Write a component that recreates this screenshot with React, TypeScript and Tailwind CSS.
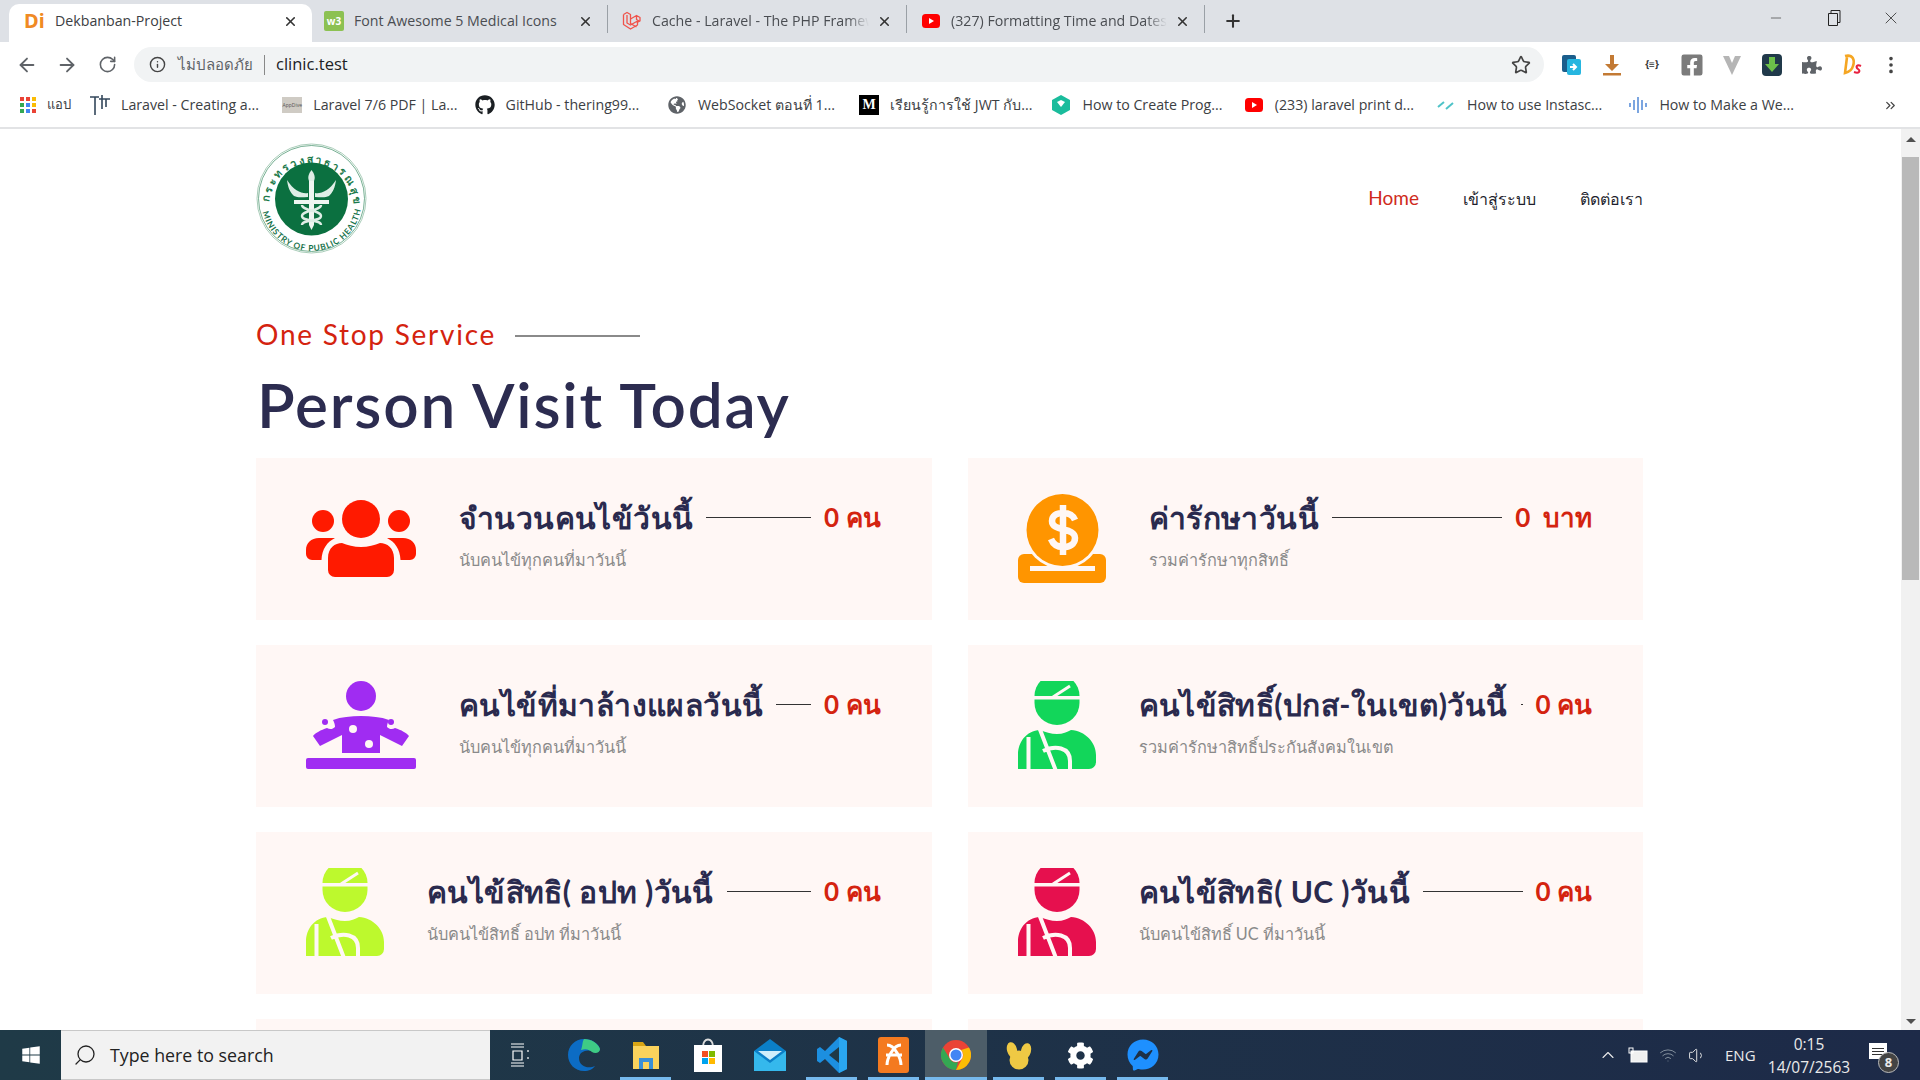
import { ArrowLeft, ArrowRight, RotateCw, Info, Star, Plus, X, Minus, Search, ChevronUp, EllipsisVertical, ChevronsRight, Volume1, Wifi } from "lucide-react";
import { FaGithub, FaGlobeAmericas, FaWindows, FaPuzzlePiece, FaFacebookSquare, FaFacebookMessenger, FaCog } from "react-icons/fa";

const CARD_BG = "#fff7f5";

const YouTube = () => (
  <svg width="18" height="14" viewBox="0 0 18 14">
    <rect width="18" height="14" rx="3.5" fill="#f00" />
    <path d="M7 4l5 3-5 3z" fill="#fff" />
  </svg>
);

const Laravel = ({ size = 20 }: { size?: number }) => (
  <svg width={size} height={size} viewBox="0 0 20 20" fill="none" stroke="#f0534b" strokeWidth="1.3" strokeLinejoin="round">
    <path d="M1.5 3.5l3.5-2 3.5 2v9l6 3.5" />
    <path d="M1.5 3.5v10l7 4.5 7-4v-4l-7 4-3.5-2v-8" />
    <path d="M8.5 8l6-3.5 3.5 2v3.5l-3 1.5M14.5 4.5v4l3.5 2" />
  </svg>
);

const tabs = [
  {
    title: "Font Awesome 5 Medical Icons",
    w: "w-[296px]",
    pad: "pl-[12px]",
    fade: "",
    icon: (
      <div className="w-[20px] h-[20px] bg-[#8cc152] rounded-[2px] flex items-center justify-center text-white text-[10px] font-bold">w3</div>
    ),
  },
  { title: "Cache - Laravel - The PHP Framew", w: "w-[299px]", pad: "pl-[14px]", fade: "[mask-image:linear-gradient(to_right,black_90%,transparent)]", icon: <Laravel /> },
  { title: "(327) Formatting Time and Dates", w: "w-[298px]", pad: "pl-[14px]", fade: "[mask-image:linear-gradient(to_right,black_90%,transparent)]", icon: <YouTube /> },
];

const bookmarks = [
  {
    t: "Laravel - Creating a...",
    i: (
      <svg width="20" height="22" viewBox="0 0 20 22" fill="none" stroke="#33475b" strokeWidth="1.6">
        <path d="M0 3h9M5 3v18M12 1v14M9 5h11M16 5v8" />
      </svg>
    ),
  },
  {
    t: "Laravel 7/6 PDF | La...",
    i: <div className="w-[20px] h-[16px] bg-[#cfcbc4] text-[5px] leading-[16px] text-center text-[#555]">AppDive</div>,
  },
  { t: "GitHub - thering99...", i: <FaGithub size={20} color="#1b1f23" /> },
  { t: "WebSocket ตอนที่ 1...", i: <FaGlobeAmericas size={18} color="#5f6368" /> },
  {
    t: "เรียนรู้การใช้ JWT กับ...",
    i: <div className="w-[20px] h-[20px] bg-black text-white text-[14px] leading-[20px] text-center font-bold font-['Liberation_Serif',serif]">M</div>,
  },
  {
    t: "How to Create Prog...",
    i: (
      <svg width="18" height="20" viewBox="0 0 18 20">
        <path d="M9 0l9 5v10l-9 5-9-5V5z" fill="#1abc9c" />
        <path d="M5 7l4-2 4 2-4 5z" fill="#fff" />
      </svg>
    ),
  },
  { t: "(233) laravel print d...", i: <YouTube /> },
  {
    t: "How to use Instasc...",
    i: (
      <svg width="20" height="20" viewBox="0 0 20 20" fill="none" stroke="#4fc3c8" strokeWidth="2">
        <path d="M2 12l6-5M10 14l7-6" />
      </svg>
    ),
  },
  {
    t: "How to Make a We...",
    i: (
      <svg width="20" height="20" viewBox="0 0 20 20" stroke="#5b8fd9" strokeWidth="1.6">
        <path d="M2 8v4M6 5v10M10 2v16M14 5v10M18 8v4" />
      </svg>
    ),
  },
];

const TabBar = () => (
  <div className="h-[42px] bg-[#dee1e6] flex items-end flex-none">
    <div className="ml-[9px] w-[303px] h-[38px] bg-white rounded-t-[10px] flex items-center pl-[15px] pr-[14px] pb-[4px]">
      <span className="w-[26px] text-[#f08a24] text-[20px] font-bold font-['Noto_Sans',sans-serif]">Di</span>
      <span className="ml-[5px] flex-1 text-[14.2px] text-[#3c4043]">Dekbanban-Project</span>
      <X size={15} strokeWidth={2.5} color="#333" />
    </div>
    {tabs.map((tab) => (
      <div key={tab.title} className={`${tab.w} ${tab.pad} h-[38px] flex items-center pr-[14px] pb-[4px] border-r border-[#9aa0a6] [border-image:linear-gradient(transparent_5%,#9aa0a6_5%,#9aa0a6_75%,transparent_75%)_1]`}>
        <div className="w-[20px] flex-none flex justify-center">{tab.icon}</div>
        <span className={`ml-[10px] flex-1 min-w-0 whitespace-nowrap text-[14.2px] text-[#4a4d52] ${tab.fade}`}>
          {tab.title}
        </span>
        <X size={15} strokeWidth={2.5} color="#333" className="ml-[8px] flex-none" />
      </div>
    ))}
    <div className="h-[38px] ml-[18px] flex items-center pb-[4px]">
      <Plus size={20} strokeWidth={2.5} color="#333" />
    </div>
    <div className="flex-1" />
    <div className="h-[42px] flex items-center text-[#333] pb-[6px]">
      <Minus size={16} strokeWidth={1} className="mr-[43px]" />
      <svg width="14" height="16" viewBox="0 0 14 16" fill="none" stroke="#222" className="mr-[40px]">
        <path d="M1.5 3.5h9v12h-9zM4 3.5v-3h9v12h-2.5" />
      </svg>
      <X size={20} strokeWidth={1} className="mr-[19px]" />
    </div>
  </div>
);

const ExtIcons = () => (
  <div className="flex items-center gap-[16px] ml-[16px]">
    <svg width="24" height="24" viewBox="0 0 24 24">
      <rect x="2" y="2" width="14" height="17" rx="2" fill="#1b5e8c" />
      <rect x="7" y="6" width="14" height="16" rx="2" fill="#26b6e0" />
      <path d="M10 14h6M13 11l3 3-3 3" stroke="#fff" strokeWidth="2" fill="none" />
    </svg>
    <svg width="24" height="24" viewBox="0 0 24 24">
      <path d="M10 2h4v9h5l-7 7-7-7h5z" fill="#c37a34" />
      <rect x="3" y="20" width="18" height="2.5" fill="#c37a34" />
    </svg>
    <span className="w-[24px] text-center text-[10px] font-bold text-[#333]">{"{≡}"}</span>
    <FaFacebookSquare size={24} color="#7b7b7b" />
    <svg width="24" height="24" viewBox="0 0 24 24">
      <path d="M3 3h18l-9 19z" fill="#b5b5b5" />
      <path d="M9 3h6l-3 7z" fill="#fff" />
    </svg>
    <svg width="24" height="24" viewBox="0 0 24 24">
      <rect x="2" y="1" width="20" height="22" rx="4" fill="#20394a" />
      <path d="M9 4h6v7h4l-7 8-7-8h4z" fill="#6cc04a" />
    </svg>
    <FaPuzzlePiece size={20} color="#5f6368" className="mx-[2px]" />
    <svg width="24" height="24" viewBox="0 0 24 24" fill="none" strokeWidth="2.6">
      <path d="M5 3c8-2 10 4 8 10-1 4-4 6-8 7l2-16" stroke="#f5a623" />
      <path d="M21 13c-4-2-6 1-3 3s1 5-4 3" stroke="#e8213f" strokeWidth="2" />
    </svg>
    <EllipsisVertical size={22} color="#444" />
  </div>
);

const Toolbar = () => (
  <div className="h-[45px] bg-white flex items-center flex-none pl-[16px]">
    <ArrowLeft size={22} strokeWidth={2} color="#5f6368" />
    <ArrowRight size={22} strokeWidth={2} color="#5f6368" className="ml-[18px]" />
    <RotateCw size={19} strokeWidth={2} color="#5f6368" className="ml-[20px]" />
    <div className="ml-[17px] w-[1410px] h-[35px] rounded-full bg-[#f1f3f4] flex items-center pl-[15px] pr-[13px]">
      <Info size={17} color="#444" />
      <span className="ml-[12px] text-[15px] text-[#5f6368]">ไม่ปลอดภัย</span>
      <div className="w-px h-[20px] bg-[#888] ml-[11px]" />
      <span className="ml-[11px] text-[16.5px] text-[#202124]">clinic.test</span>
      <div className="flex-1" />
      <Star size={20} color="#444" />
    </div>
    <ExtIcons />
  </div>
);

const BookmarkBar = () => (
  <div className="h-[42px] bg-white flex items-center flex-none pl-[20px] pb-[4px] border-b-[2px] border-[#e2e3e5]">
    <div className="grid grid-cols-3 gap-[2px] w-[16px] flex-none">
      {["#ea4335", "#ea4335", "#fbbc05", "#34a853", "#4285f4", "#fbbc05", "#34a853", "#4285f4", "#ea4335"].map((c, i) => (
        <div key={i} className="h-[4px]" style={{ backgroundColor: c }} />
      ))}
    </div>
    <span className="ml-[11px] w-[43px] flex-none text-[13px] text-[#3c4043]">แอป</span>
    <div className="flex items-center">
      {bookmarks.map((b) => (
        <div key={b.t} className="w-[192.3px] flex-none flex items-center gap-[11px]">
          <div className="w-[20px] flex justify-center flex-none">{b.i}</div>
          <span className="whitespace-nowrap text-[14.2px] text-[#3c4043]">{b.t}</span>
        </div>
      ))}
    </div>
    <div className="flex-1" />
    <ChevronsRight size={15} color="#444" className="mr-[22px]" />
  </div>
);

const Logo = () => (
  <svg width="111" height="111" viewBox="0 0 111 111">
    <defs>
      <path id="arcTop" d="M13.500 62a42 42 0 1 1 84 0" />
      <path id="arcBottom" d="M5.500 58a50 50 0 0 0 100 0" />
    </defs>
    <circle cx="55.500" cy="55.500" r="54.500" fill="#fff" stroke="#a9cdb9" strokeWidth="1" />
    <circle cx="55.500" cy="55.500" r="53" fill="none" stroke="#1c7a4b" strokeWidth="0.6" />
    <text fontSize="10.500" fontWeight="700" fill="#1c7a4b">
      <textPath href="#arcTop" startOffset="2%" textLength="128" lengthAdjust="spacing">กระทรวงสาธารณสุข</textPath>
    </text>
    <circle cx="55.500" cy="56" r="36.500" fill="#0b7040" />
    <text fontSize="8.300" fontWeight="700" fill="#17724a" fontFamily="Lato, sans-serif">
      <textPath href="#arcBottom" startOffset="7%" textLength="137" lengthAdjust="spacing">MINISTRY OF PUBLIC HEALTH</textPath>
    </text>
    <path d="M55.500 27c3 4 4 7 2.500 11h-5c-1.500-4-.500-7 2.500-11z" fill="#dfeee6" />
    <path d="M53 38h5v44l-2.500 5-2.500-5z" fill="#eef6f1" />
    <path d="M52 50c-6 1-14-2-21-13 1 8 3 12 7 16 4 2 9 1 14 1zM59 50c6 1 14-2 21-13-1 8-3 12-7 16-4 2-9 1-14 1z" fill="#dfeee6" />
    <path d="M38 57h35v4H38z" fill="#eef6f1" />
    <path d="M46 62c0 6 19 5 19 11s-19 3-19 9M65 62c0 6-19 5-19 11s19 3 19 9" fill="none" stroke="#dfeee6" strokeWidth="2.400" />
  </svg>
);

const UsersIcon = () => (
  <svg width="110" height="77" viewBox="0 0 110 77" fill="#ff1a00">
    <circle cx="55" cy="19" r="19" />
    <circle cx="17" cy="21" r="11" />
    <circle cx="93" cy="21" r="11" />
    <path d="M22 70V58c0-10 7-15 14-15 5 2 12 4 19 4s14-2 19-4c7 0 14 5 14 15v12a7 7 0 0 1-7 7H29a7 7 0 0 1-7-7z" />
    <path d="M0 54v-4c0-7 5-12 13-12h16c-8 4-13 11-13.500 22H6a6 6 0 0 1-6-6z" />
    <path d="M110 54v-4c0-7-5-12-13-12H81c8 4 13 11 13.500 22H104a6 6 0 0 0 6-6z" />
  </svg>
);

const CoinIcon = () => (
  <svg width="88" height="89" viewBox="0 0 88 89">
    <path d="M0 66a6 6 0 0 1 6-6h76a6 6 0 0 1 6 6v17a6 6 0 0 1-6 6H6a6 6 0 0 1-6-6z" fill="#ff9500" />
    <circle cx="44.500" cy="36" r="39" fill={CARD_BG} />
    <circle cx="44.500" cy="36" r="36" fill="#ff9500" />
    <rect x="12" y="72" width="65" height="5" fill={CARD_BG} />
    <path d="M57 26c-2-5-7-7-12-7-7 0-11 3-11 8 0 11 23 6 23 17 0 6-5 9-12 9-6 0-10-3-12-8M45 11v50" fill="none" stroke={CARD_BG} strokeWidth="6.500" />
  </svg>
);

const MassageIcon = () => (
  <svg width="110" height="88" viewBox="0 0 110 88" fill="#a02cf2">
    <circle cx="55" cy="15" r="15" />
    <rect y="77" width="110" height="11" rx="2" />
    <path d="M36 72V54L14 65 7 55c2-3 8-6 14-8 3 2 6 1 8-1 0-3-1-5-2-7 8-3 18-4 28-4s20 1 28 4c-1 2-2 4-2 7 2 2 5 3 8 1 6 2 12 5 14 8l-7 10-22-11v18z" />
    <circle cx="47" cy="48" r="4" fill={CARD_BG} />
    <circle cx="63" cy="63" r="4" fill={CARD_BG} />
    <circle cx="19" cy="41" r="3" />
    <circle cx="85" cy="41" r="3" />
  </svg>
);

const PatientIcon = ({ color }: { color: string }) => (
  <svg width="78" height="88" viewBox="0 0 78 88" fill={color}>
    <path d="M16.500 15a22.500 22 0 0 1 45 0z" />
    <path d="M16.500 18.500h45V22a22.500 22 0 0 1-45 0z" />
    <path d="M0 88V74c0-13 8-24 22-25 5 2 11 4 17 4s10-2 14-4c14 1 25 12 25 25v7a7 7 0 0 1-7 7z" />
    <g fill="none" stroke={CARD_BG}>
      <path d="M10.500 56v34M21 46l17 44M25 70c12-6 27-4 27 10v10" strokeWidth="4" />
      <path d="M52 5L35 16" strokeWidth="3" />
    </g>
  </svg>
);

const Card = ({ icon, title, desc, value, unit }: { icon: React.ReactNode; title: string; desc: string; value: string; unit: string }) => (
  <div className="h-[162px] bg-[#fff7f5] flex pl-[50px] pr-[51px] pt-[36px]">
    <div className="h-[88px] flex items-center flex-none mr-[43px]">{icon}</div>
    <div className="flex-1 min-w-0">
      <div className="flex items-center h-[46px]">
        <span className="text-[30px] tracking-[0.4px] font-bold text-[#2a2a4e] whitespace-nowrap">{title}</span>
        <div className="flex-1 h-px bg-[#333] mx-[13px]" />
        <span className="text-[26px] font-bold text-[#d4230f] whitespace-nowrap">
          {value} {unit}
        </span>
      </div>
      <p className="mt-[8px] text-[16.3px] text-[#8a8a8a] whitespace-nowrap">{desc}</p>
    </div>
  </div>
);

const Page = () => (
  <div className="flex-1 min-w-0 overflow-hidden pl-[256px] pr-[258px] font-['Lato',sans-serif]">
    <div className="flex items-center justify-between pt-[14px]">
      <Logo />
      <nav className="flex items-center gap-[44px] text-[16px] text-[#1f1f2e]">
        <a className="text-[19px] text-[#cf2a1c]">Home</a>
        <a>เข้าสู่ระบบ</a>
        <a>ติดต่อเรา</a>
      </nav>
    </div>
    <div className="mt-[62px] flex items-center h-[36px]">
      <span className="text-[28px] leading-[36px] text-[#d4230f] tracking-[1.75px]">One Stop Service</span>
      <div className="ml-[19px] w-[125px] h-[2px] bg-[#8a8a8a] mt-[4px]" />
    </div>
    <h1 className="mt-[19px] h-[67px] text-[62px] leading-[67px] font-semibold text-[#2c2c50] tracking-[1.8px] pl-[1px]">Person Visit Today</h1>
    <div className="mt-[20px] grid grid-cols-2 gap-x-[36px] gap-y-[25px]">
      <Card icon={<UsersIcon />} title="จำนวนคนไข้วันนี้" desc="นับคนไข้ทุกคนที่มาวันนี้" value="0" unit="คน" />
      <Card icon={<CoinIcon />} title="ค่ารักษาวันนี้" desc="รวมค่ารักษาทุกสิทธิ์" value="0" unit={"\u00a0บาท"} />
      <Card icon={<MassageIcon />} title="คนไข้ที่มาล้างแผลวันนี้" desc="นับคนไข้ทุกคนที่มาวันนี้" value="0" unit="คน" />
      <Card icon={<PatientIcon color="#12d65a" />} title="คนไข้สิทธิ์(ปกส-ในเขต)วันนี้" desc="รวมค่ารักษาสิทธิ์ประกันสังคมในเขต" value="0" unit="คน" />
      <Card icon={<PatientIcon color="#bdf92d" />} title="คนไข้สิทธิ( อปท )วันนี้" desc="นับคนไข้สิทธิ์ อปท ที่มาวันนี้" value="0" unit="คน" />
      <Card icon={<PatientIcon color="#e6104e" />} title="คนไข้สิทธิ( UC )วันนี้" desc="นับคนไข้สิทธิ์ UC ที่มาวันนี้" value="0" unit="คน" />
      <div className="h-[162px] bg-[#fff7f5]" />
      <div className="h-[162px] bg-[#fff7f5]" />
    </div>
  </div>
);

const Scrollbar = () => (
  <div className="w-[19px] flex-none bg-[#f1f1f1] flex flex-col items-center">
    <div className="h-[17px] flex items-center justify-center flex-none mt-[2px]">
      <div className="w-0 h-0 border-x-[5px] border-x-transparent border-b-[5px] border-b-[#505050]" />
    </div>
    <div className="w-[17px] h-[423px] mt-[9px] bg-[#b9b9b9] flex-none" />
    <div className="flex-1" />
    <div className="h-[17px] flex items-center justify-center flex-none">
      <div className="w-0 h-0 border-x-[5px] border-x-transparent border-t-[5px] border-t-[#505050]" />
    </div>
  </div>
);

const TaskIcon = ({ children, active, on }: { children: React.ReactNode; active?: boolean; on?: boolean }) => (
  <div className={`relative h-[50px] flex items-center justify-center flex-none ${on ? "w-[62px] ml-[-5px] mr-[6px] bg-[#4d5d68]" : "w-[51px] mr-[11px]"}`}>
    {children}
    {active && <div className="absolute bottom-0 inset-x-0 h-[3px] bg-[#76b9ed]" />}
  </div>
);

const Chrome = () => (
  <svg width="30" height="30" viewBox="0 0 30 30">
    <circle cx="15" cy="15" r="15" fill="#ea4335" />
    <path d="M15 30A15 15 0 0 1 2 7.500L9 19a7 7 0 0 0 8 3z" fill="#34a853" />
    <path d="M28 7.500A15 15 0 0 1 15 30l6-11a7 7 0 0 0-1-9z" fill="#fbbc05" />
    <circle cx="15" cy="15" r="7" fill="#fff" />
    <circle cx="15" cy="15" r="5.500" fill="#4285f4" />
  </svg>
);

const VsCode = () => (
  <svg width="30" height="36" viewBox="0 0 30 36">
    <path d="M22 0l8 4v28l-8 4-14-14-5 4-3-2v-12l3-2 5 4z" fill="#1c8fe0" />
    <path d="M22 10L12 18l10 8z" fill="#1f3a47" />
    <path d="M22 0l8 4v28l-8 4z" fill="#2aa6f0" />
  </svg>
);

const Xampp = () => (
  <div className="w-[31px] h-[36px] rounded-[3px] bg-[#f47a20] flex items-center justify-center">
    <svg width="22" height="26" viewBox="0 0 22 26" fill="none" stroke="#fff" strokeWidth="3">
      <path d="M4 3c8 0 14 14 14 20M18 3C10 3 4 17 4 23M3 13h16" />
    </svg>
  </div>
);

const Taskbar = () => (
  <div className="h-[50px] flex-none flex items-center bg-linear-to-r from-[#1f3a47] to-[#1d2a48] text-white font-['Open_Sans',sans-serif]">
    <div className="w-[61px] flex justify-center flex-none">
      <FaWindows size={20} />
    </div>
    <div className="w-[429px] h-[50px] bg-[#f2f2f2] border-y border-[#c8c8c8] flex items-center flex-none pl-[12px] text-[#222]">
      <Search size={24} strokeWidth={1.3} className="-scale-x-100" />
      <span className="ml-[13px] text-[17.8px]">Type here to search</span>
    </div>
    <div className="w-[60px] flex justify-center flex-none">
      <svg width="20" height="24" viewBox="0 0 20 24" fill="none" stroke="#fff" strokeWidth="1.2">
        <path d="M1 1h13M1 4h13M3 8h9v9H3zM1 20h13M1 23h13M18 7v2M18 14v2" />
      </svg>
    </div>
    <div className="flex items-center ml-[8px]">
      <TaskIcon>
        <svg width="32" height="32" viewBox="0 0 32 32">
          <path d="M16 0C7 0 0 7 0 16c0 9 7 16 16 16 5 0 9-2 11-5-6 3-16 1-16-8 0-6 7-9 13-7 3 1 7 2 8-2C31 5 24 0 16 0z" fill="#0c6cc4" />
          <path d="M16 0c7 0 14 4 16 10 0 4-5 5-8 3-2-2-6-4-11-2 2-5 1-8 3-11z" fill="#3ecb85" />
        </svg>
      </TaskIcon>
      <TaskIcon active>
        <svg width="30" height="30" viewBox="0 0 30 30">
          <path d="M2 2h10l3 4H2z" fill="#d9a514" />
          <rect x="2" y="6" width="26" height="23" fill="#fbd35c" />
          <rect x="8" y="18" width="14" height="11" fill="#3a8fd6" />
          <rect x="12" y="22" width="6" height="7" fill="#fbd35c" />
        </svg>
      </TaskIcon>
      <TaskIcon>
        <svg width="28" height="34" viewBox="0 0 28 34">
          <path d="M9 9c0-10 10-10 10 0" fill="none" stroke="#ddd" strokeWidth="2" />
          <rect y="7" width="28" height="27" fill="#fff" />
          <rect x="8" y="13" width="6" height="6" fill="#f25022" />
          <rect x="15" y="13" width="6" height="6" fill="#7fba00" />
          <rect x="8" y="20" width="6" height="6" fill="#00a4ef" />
          <rect x="15" y="20" width="6" height="6" fill="#ffb900" />
        </svg>
      </TaskIcon>
      <TaskIcon>
        <svg width="32" height="32" viewBox="0 0 32 32">
          <path d="M0 12L16 0l16 12v20H0z" fill="#0b7fc7" />
          <path d="M0 12l16 12 16-12v20H0z" fill="#35b8ec" />
          <path d="M4 12h24L16 21z" fill="#cfeefb" />
        </svg>
      </TaskIcon>
      <TaskIcon active>
        <VsCode />
      </TaskIcon>
      <TaskIcon active>
        <Xampp />
      </TaskIcon>
      <TaskIcon active on>
        <Chrome />
      </TaskIcon>
      <TaskIcon active>
        <svg width="30" height="30" viewBox="0 0 30 30" fill="#efc944">
          <circle cx="15" cy="20" r="9.500" />
          <ellipse cx="8" cy="10" rx="5" ry="8" transform="rotate(-15 8 10)" />
          <ellipse cx="22" cy="11" rx="5" ry="8" transform="rotate(15 22 11)" />
        </svg>
      </TaskIcon>
      <TaskIcon active>
        <FaCog size={27} color="#fff" />
      </TaskIcon>
      <TaskIcon active>
        <FaFacebookMessenger size={32} color="#1e90ff" />
      </TaskIcon>
    </div>
    <div className="flex-1" />
    <div className="flex items-center text-[#eaeaea]">
      <ChevronUp size={20} strokeWidth={1.3} className="mr-[10px]" />
      <svg width="20" height="16" viewBox="0 0 20 16" className="mr-[11px]">
        <rect x="3" y="4" width="16" height="11" fill="#f0f0f0" stroke="#fff" />
        <rect x="1" y="1" width="4" height="5" fill="none" stroke="#fff" />
      </svg>
      <Wifi size={18} strokeWidth={1.2} color="#8c99a5" className="mr-[11px]" />
      <Volume1 size={19} strokeWidth={1.2} className="mr-[18px]" />
      <span className="text-[15px] w-[30px]">ENG</span>
      <div className="w-[102px] ml-[3px] text-center text-[15.5px] leading-[23px] pt-[1px]">
        <div>0:15</div>
        <div>14/07/2563</div>
      </div>
      <div className="relative w-[30px] h-[30px] ml-[6px] mr-[24px]">
        <div className="absolute left-[3px] top-[3px] w-[18px] h-[16px] bg-white flex flex-col justify-center gap-[2px] px-[3px]">
          <div className="h-[1px] bg-[#333]" />
          <div className="h-[1px] bg-[#333]" />
          <div className="h-[1px] bg-[#333]" />
        </div>
        <div className="absolute left-[12px] top-[12px] w-[21px] h-[21px] rounded-full bg-[#444] border border-[#bbb] text-[13px] leading-[19px] text-center font-bold">8</div>
      </div>
    </div>
  </div>
);

export default function App() {
  return (
    <div className="w-[1920px] h-[1080px] flex flex-col overflow-hidden bg-white font-['Open_Sans',sans-serif]">
      <TabBar />
      <Toolbar />
      <BookmarkBar />
      <div className="flex-1 min-h-0 flex">
        <Page />
        <Scrollbar />
      </div>
      <Taskbar />
    </div>
  );
}
